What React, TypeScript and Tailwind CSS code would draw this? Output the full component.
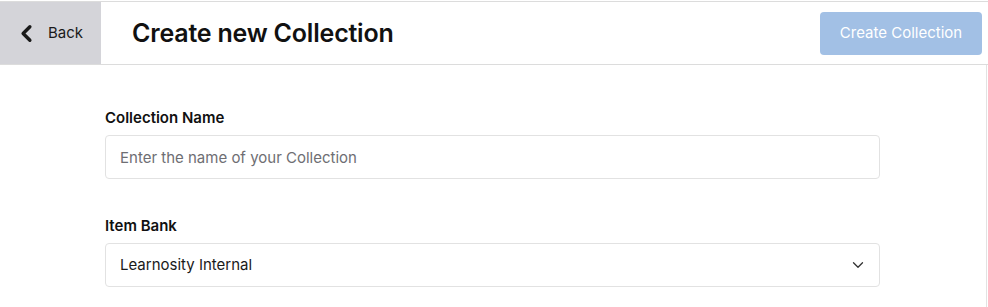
import { ChevronLeft, ChevronDown } from 'lucide-react';

const Field = ({ label, children }: { label: string; children: React.ReactNode }) => (
  <div className="flex flex-col">
    <label className="text-[15px] font-semibold leading-[20px] text-[#111]">{label}</label>
    <div className="mt-[7px]">{children}</div>
  </div>
);

export default function App() {
  return (
    <div className="h-[307px] w-[988px] overflow-hidden bg-white font-['Inter',sans-serif]">
      {/* Header */}
      <header className="mt-px flex h-[64px] items-stretch border-t border-b border-[#dcdcdc]">
        <button className="flex w-[101px] items-center gap-[8px] bg-[#d4d4d9] pl-[13px] text-[15px] text-[#1a1a1a]">
          <ChevronLeft size={27} strokeWidth={3} />
          <span>Back</span>
        </button>
        <h1 className="ml-[31px] flex items-center pt-[1px] text-[25px] font-semibold tracking-[-0.2px] text-[#111]">
          Create new Collection
        </h1>
        <div className="ml-auto flex items-center pr-[6px]">
          <button className="h-[43px] w-[162px] rounded-[4px] bg-[#a2c0e5] text-[15px] text-white">
            Create Collection
          </button>
        </div>
      </header>

      {/* Body */}
      <main className="mr-[1px] h-full border-r border-[#e2e2e2] pl-[105px] pt-[43px]">
        <div className="flex w-[775px] flex-col gap-[37px]">
          <Field label="Collection Name">
            <input
              className="h-[44px] w-full rounded-[4px] border border-[#e2e2e2] px-[14px] text-[15px] text-[#222] outline-none placeholder:text-[#6e6e73]"
              placeholder="Enter the name of your Collection"
            />
          </Field>
          <Field label="Item Bank">
            <div className="flex h-[44px] w-full items-center justify-between rounded-[4px] border border-[#e2e2e2] pl-[14px] pr-[12px] text-[15px] text-[#1a1a1a]">
              <span>Learnosity Internal</span>
              <ChevronDown size={18} strokeWidth={1.75} className="text-[#333]" />
            </div>
          </Field>
        </div>
      </main>
    </div>
  );
}
